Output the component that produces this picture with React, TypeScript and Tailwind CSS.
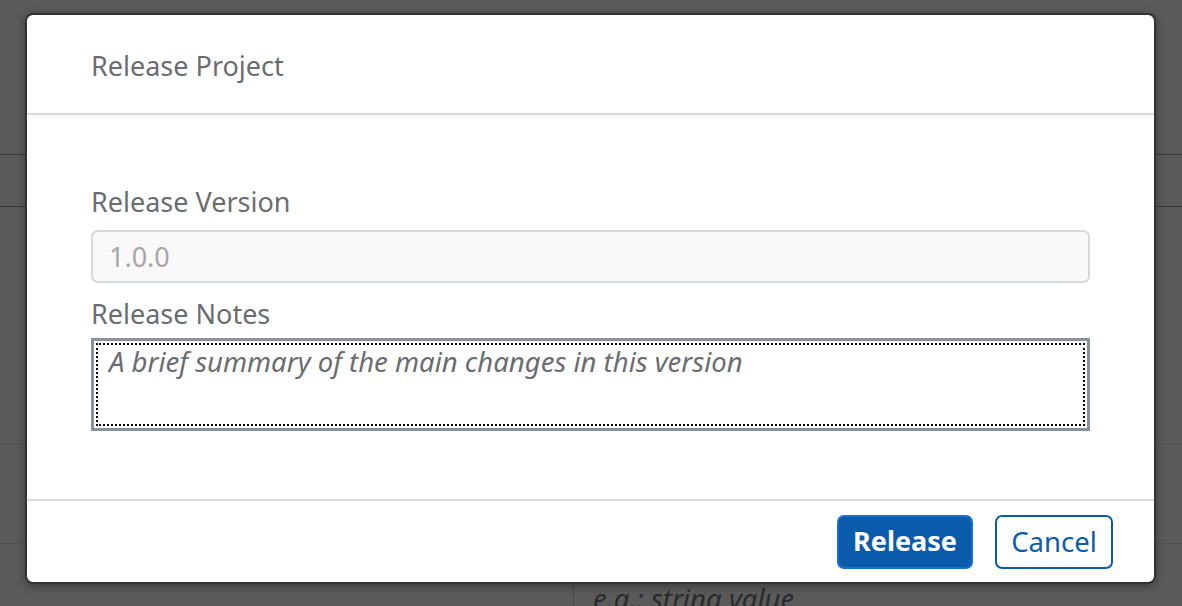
import React from 'react';

const font = { fontFamily: '"Noto Sans", "Open Sans", Arial, sans-serif' };

function Backdrop() {
  return (
    <div className="flex flex-col h-[606px] w-[1182px] bg-[#5a5a5a] overflow-hidden">
      <div className="h-[155px] shrink-0 border-b border-[#3a3a3a]" />
      <div className="h-[52px] shrink-0 border-b border-[#3a3a3a]" />
      <div className="h-[238px] shrink-0 border-b border-[#525252]" />
      <div className="h-[99px] shrink-0 border-b border-[#525252]" />
      <div className="h-[38px] shrink-0" />
      <div className="flex flex-1">
        <div className="w-[574px] shrink-0 border-r border-[#474747]" />
        <div className="flex-1 pl-[19px] pt-[2px] text-[27.5px] italic leading-[30px] text-[#2b2b2b]">
          e.g.: string value
        </div>
      </div>
    </div>
  );
}

export default function App() {
  return (
    <div className="relative h-[606px] w-[1182px] overflow-hidden" style={font}>
      <Backdrop />

      <div className="absolute left-[25px] top-[13px] flex h-[571px] w-[1131px] flex-col overflow-hidden rounded-[8px] border-2 border-[#333333] bg-white shadow-[0_2px_8px_rgba(0,0,0,0.35)]">
        {/* header */}
        <div className="flex h-[100px] shrink-0 items-center border-b-2 border-[#dadada] px-[64px] pt-[3px] shadow-[0_2px_4px_rgba(0,0,0,0.04)]">
          <h1 className="text-[27px] leading-[32px] text-[#6a6d70]">Release Project</h1>
        </div>

        {/* body */}
        <div className="flex flex-1 flex-col px-[64px] pt-[71px]">
          <label className="text-[27px] leading-[32px] text-[#6a6d70]">Release Version</label>
          <input
            disabled
            value="1.0.0"
            readOnly
            className="mt-[12px] h-[53px] w-[999px] rounded-[7px] border-2 border-[#d5d8dc] bg-[#f9f9f9] px-[16px] text-[27px] text-[#a6a6a6]"
          />
          <label className="mt-[15px] text-[27px] leading-[32px] text-[#6a6d70]">Release Notes</label>
          <div className="mt-[8px] h-[93px] w-[999px] border-[3px] border-[#89919a] p-[2px]">
            <textarea
              placeholder="A brief summary of the main changes in this version"
              className="h-full w-full resize-none border-2 border-dotted border-black px-[11px] pt-[1px] text-[27.5px] italic leading-[32px] text-[#32363a] outline-none placeholder:text-[#6a6d70]"
            />
          </div>
        </div>

        {/* footer */}
        <div className="flex h-[83px] shrink-0 items-center justify-end gap-[22px] border-t-2 border-[#dadada] pr-[41px]">
          <button className="h-[54px] w-[136px] rounded-[7px] border-2 border-[#1870cf] bg-[#0b5bac] text-[27px] font-bold text-white">
            Release
          </button>
          <button className="h-[54px] w-[118px] rounded-[7px] border-2 border-[#0b5bac] bg-white text-[27.5px] text-[#0b5bac]">
            Cancel
          </button>
        </div>
      </div>
    </div>
  );
}
